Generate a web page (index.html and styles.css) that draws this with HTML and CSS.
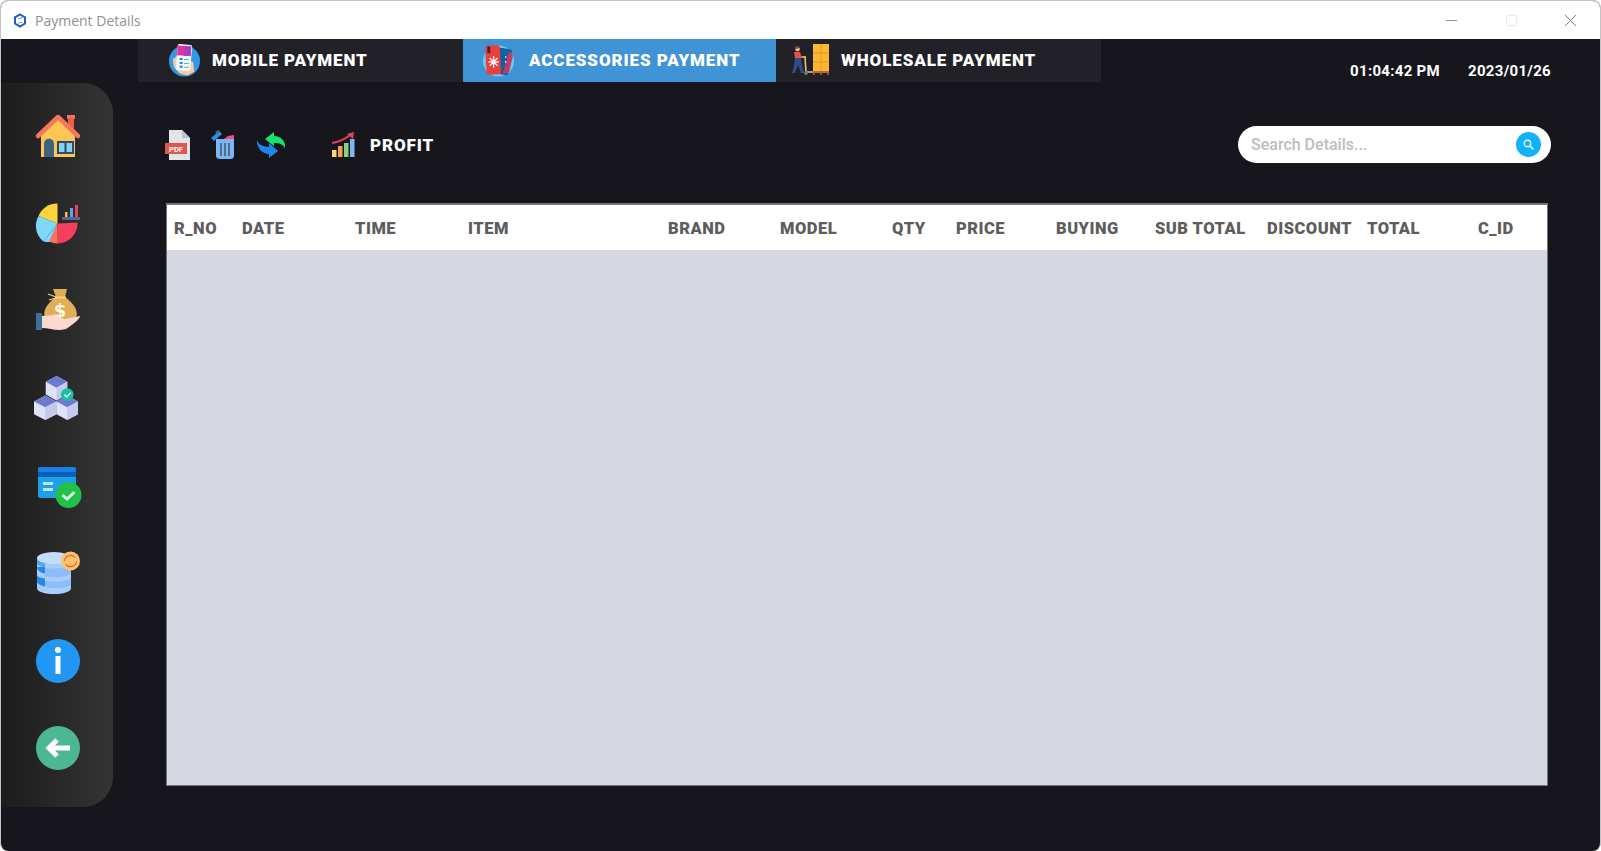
FILE: index.html
```html
<!DOCTYPE html>
<html lang="en">

<head>
    <meta charset="UTF-8">
    <title>Payment Details</title>
    <link rel="stylesheet" href="styles.css">
</head>

<body>
<div class="window">

    <div class="titlebar">
        <svg class="app-logo" viewBox="0 0 14 14"><path d="M7 1 12 3.800V10L7 13 2 10V3.800Z" fill="none" stroke="#1a5fd0" stroke-width="2"/><path d="M5 5.500 9 4M9.500 9 5 9.500" stroke="#6fa0e8" stroke-width="1.200"/></svg>
        <span class="title">Payment Details</span>
        <div class="controls">
            <svg viewBox="0 0 14 14"><path d="M0 7H12" stroke="#8a8a8a" stroke-width="1"/></svg>
            <svg viewBox="0 0 14 14"><rect x="1.500" y="1.500" width="11" height="11" rx="1" fill="none" stroke="#e6e6e6"/></svg>
            <svg viewBox="0 0 14 14"><path d="M1 1 13 13M13 1 1 13" stroke="#777" stroke-width="1"/></svg>
        </div>
    </div>

    <div class="topbar">
        <nav class="tabs">
            <a class="tab tab-mobile">
                <svg class="tab-icon" viewBox="0 0 34 36">
                    <circle cx="17" cy="19" r="16" fill="#2f9be4"/>
                    <path d="M5 17 11 13 26 20 27 30 20 34 12 32 6 25Z" fill="#f8c9a4"/>
                    <rect x="9" y="2" width="15" height="27" rx="2" transform="rotate(5 16 15)" fill="#f4f6fb"/>
                    <path d="M10 3 24 4 23.400 14 9.300 13Z" fill="#ea2f9c"/>
                    <path d="M17 3.500 24 4 23.400 14 16 13.500Z" fill="#a640c8"/>
                    <path d="M12 16h3v2h-3zM12 20h3v2h-3zM12 24h3v2h-3z" fill="#2f7fd0"/>
                    <path d="M16.500 17h5v1h-5zM16.500 21h5v1h-5zM16.500 25h5v1h-5z" fill="#35c0d8"/>
                </svg>
                <span>MOBILE PAYMENT</span>
            </a>
            <a class="tab tab-accessories active">
                <svg class="tab-icon" viewBox="0 0 34 36">
                    <circle cx="17" cy="19" r="16" fill="#6fc9ee"/>
                    <rect x="15" y="6" width="14" height="27" rx="2" transform="rotate(10 22 19)" fill="#15609e"/>
                    <path d="M28 9 32 13 28 30 21 33Z" fill="#c23a60"/>
                    <rect x="4" y="3" width="15" height="30" rx="2" fill="#ea3f3a" transform="rotate(-3 11 18)"/>
                    <rect x="5.500" y="4" width="3" height="7" fill="#4a2030"/>
                    <path d="M12 14V26M6.500 20H17.500M8 16 16 24M16 16 8 24" stroke="#fff" stroke-width="1.400"/>
                    <path d="M24 14h1v2h-1zM24 19h1v2h-1z" fill="#fff"/>
                </svg>
                <span>ACCESSORIES PAYMENT</span>
            </a>
            <a class="tab tab-wholesale">
                <svg class="tab-icon wide" viewBox="0 0 38 32">
                    <rect x="22" y="0" width="16" height="28" fill="#fbb731"/>
                    <path d="M22 9H38M22 18H38M30 0V28" stroke="#e59a1e" stroke-width="1"/>
                    <rect x="22" y="27" width="16" height="2" fill="#b9683a"/>
                    <path d="M22 29h2v2h-2zM29 29h2v2h-2zM36 29h2v2h-2z" fill="#8f4f2a"/>
                    <path d="M14 13 15 28H22" stroke="#e8c860" stroke-width="1.600" fill="none"/>
                    <path d="M10 13H15" stroke="#f3d06a" stroke-width="1.600"/>
                    <circle cx="6.500" cy="5" r="2.400" fill="#f1b58d"/>
                    <path d="M4 3.500 9 2.500 9 4 4 5Z" fill="#7a3d22"/>
                    <path d="M3 8H9L11 14H4Z" fill="#e5533d"/>
                    <path d="M4 14H10L11 21 13 29H10L7 21 4 29H1L3 21Z" fill="#2f4c8c"/>
                    <circle cx="15" cy="29" r="2" fill="#6a7486"/>
                </svg>
                <span>WHOLESALE PAYMENT</span>
            </a>
        </nav>
        <div class="clock">
            <span>01:04:42 PM</span>
            <span>2023/01/26</span>
        </div>
    </div>

    <div class="main">
        <aside class="sidebar">
            <svg class="side-icon" viewBox="0 0 44 44">
                <rect x="31" y="2" width="8" height="4" fill="#f4775a"/>
                <rect x="32" y="5" width="6" height="12" fill="#e8604a"/>
                <path d="M5 21 22 5 39 21V44H5Z" fill="#fdc654"/>
                <path d="M2 23 22 4 42 23" fill="none" stroke="#f4775a" stroke-width="4.500" stroke-linecap="round" stroke-linejoin="round"/>
                <path d="M8 44V31C8 24 18 24 18 31V44Z" fill="#41627c"/>
                <rect x="21" y="28" width="17" height="13" fill="#2f4a62"/>
                <path d="M23 30H28.500V39H23ZM30.500 30H36V39H30.500Z" fill="#7fd4f7"/>
            </svg>
            <svg class="side-icon pie" viewBox="0 0 44 44">
                <path d="M20.500 22.400V2.400A20 20 0 0 0 1.500 15Z" fill="#fdd33d"/>
                <path d="M20.500 22.400 1.500 15A20 20 0 0 0 6.500 40.500Z" fill="#7ed6f8"/>
                <path d="M20.500 22.400 6.500 40.500A20 20 0 0 0 13 41Z" fill="#7ed6f8"/>
                <path d="M20.500 22.400 12 40.500A20 20 0 0 0 21 42.400Z" fill="#f4775a"/>
                <path d="M20.500 22.400 20 42.400A20 20 0 0 0 40.500 21.500Z" fill="#f43f5e"/>
                <rect x="25" y="16" width="18" height="3" rx="1" fill="#5a6690"/>
                <rect x="28" y="11" width="2.500" height="5" fill="#fdc03d"/>
                <rect x="33" y="7" width="3" height="9" fill="#5aa5ee"/>
                <rect x="38" y="4" width="3" height="12" fill="#e8405e"/>
            </svg>
            <svg class="side-icon" viewBox="0 0 44 44">
                <path d="M17 1H31L29 9H20Z" fill="#e0ad50"/>
                <path d="M20 9H29C37 15 43 22 40 30 37 36 13 37 9 30 6 22 12 15 20 9Z" fill="#dfae56"/>
                <path d="M19 9.500H30" stroke="#f5d488" stroke-width="2"/>
                <path d="M20 9 12 6M20 10 13 12" stroke="#f5d488" stroke-width="1.200"/>
                <text class="dollar" x="24" y="29">$</text>
                <path d="M6 28 17 27C20 26 26 31 29 31L44 28C44 31 36 37 30 41 22 44 14 40 6 40Z" fill="#fbd8d0"/>
                <rect x="0" y="25" width="6" height="17" fill="#3f7097"/>
            </svg>
            <svg class="side-icon cubes" viewBox="0 0 45 45">
                <path d="M12 6 23 0 34 6V19L23 25 12 19Z" fill="#dfe3fa"/>
                <path d="M12 6 23 0 34 6 23 12Z" fill="#6d79cf"/>
                <path d="M23 12V25L34 19V6Z" fill="#c3c9ef"/>
                <path d="M0 26 11.500 20 23 26V39L11.500 45 0 39Z" fill="#dfe3fa"/>
                <path d="M0 26 11.500 20 23 26 11.500 32Z" fill="#6d79cf"/>
                <path d="M11.500 32V45L23 39V26Z" fill="#c3c9ef"/>
                <path d="M23 26 34 20 45 26V39L34 45 23 39Z" fill="#dfe3fa"/>
                <path d="M23 26 34 20 45 26 34 32Z" fill="#6d79cf"/>
                <path d="M34 32V45L45 39V26Z" fill="#c3c9ef"/>
                <circle cx="34" cy="19" r="6.500" fill="#1cbf9f"/>
                <path d="M31 19 33.500 21.500 37.500 17" fill="none" stroke="#e8fff8" stroke-width="1.400"/>
            </svg>
            <svg class="side-icon card" viewBox="0 0 44 44">
                <rect x="0" y="0" width="38" height="31" rx="2.500" fill="#1d9fea"/>
                <path d="M0 2.500A2.500 2.500 0 0 1 2.500 0H35.500A2.500 2.500 0 0 1 38 2.500V5H0Z" fill="#1a80e8"/>
                <rect x="0" y="5" width="38" height="5" fill="#0c5fb8"/>
                <path d="M5 15H15V18H5ZM5 21H15V24H5Z" fill="#b8e6fb"/>
                <circle cx="30.500" cy="28" r="13" fill="#22c14a"/>
                <path d="M24.500 28 29 32 36.500 25" fill="none" stroke="#dff8ee" stroke-width="3"/>
            </svg>
            <svg class="side-icon db" viewBox="0 0 44 44">
                <path d="M0 8V37C0 45 34 45 34 37V8Z" fill="#a9cdfb"/>
                <path d="M0 16C0 21 6 22 8 22.500V16ZM0 30C0 34 6 35 8 35.500V27.500C5 27 1 26 0 25Z" fill="#1f8ce8"/>
                <path d="M0 8V13C1 15 6 16 8 16.500V8Z" fill="#5aa5f0"/>
                <path d="M8 16.500C18 19 30 17 34 13V22C30 26 18 28 8 25.500Z" fill="#8ebcf8"/>
                <path d="M8 30C18 32 30 30 34 27V34C30 37 18 38 8 36Z" fill="#8ebcf8"/>
                <ellipse cx="17" cy="7" rx="17" ry="6" fill="#c4dcfb"/>
                <circle cx="33.500" cy="10" r="9.500" fill="#fcc56b"/>
                <path d="M27.500 10A6 6 0 0 1 38.500 7M39.500 10A6 6 0 0 1 28.500 13" fill="none" stroke="#f0604a" stroke-width="1.300"/>
            </svg>
            <svg class="side-icon" viewBox="0 0 44 44">
                <circle cx="22" cy="22" r="22" fill="#2196f3"/>
                <circle cx="22" cy="11" r="3" fill="#fff"/>
                <rect x="19.500" y="17" width="5" height="18" fill="#fff"/>
            </svg>
            <svg class="side-icon" viewBox="0 0 44 44">
                <circle cx="22" cy="22" r="22" fill="#4cb795"/>
                <path d="M34 22H14M21 14 13 22 21 30" fill="none" stroke="#fff" stroke-width="5"/>
            </svg>
        </aside>

        <section class="content">
            <div class="toolbar">
                <div class="tools">
                    <svg class="tool tool-pdf" viewBox="0 0 25 30">
                        <path d="M4 0H17L25 8V30H4Z" fill="#e3e4e8"/>
                        <path d="M17 0 25 8H17Z" fill="#bfc1c8"/>
                        <rect x="0" y="13" width="22" height="11" fill="#e2574c"/>
                        <text class="pdf-label" x="11" y="21.500">PDF</text>
                    </svg>
                    <svg class="tool tool-trash" viewBox="0 0 23 29">
                        <path d="M5 9H23V26C23 28 21 29 19 29H9C7 29 5 28 5 26Z" fill="#7ab8f5"/>
                        <path d="M10 13V26M14 13V26M18 13V26" stroke="#4a5a70" stroke-width="1.600"/>
                        <path d="M13 9 17 6 23 5V9Z" fill="#f04e7c"/>
                        <path d="M0 8 8 1 11 4 3 11Z" fill="#2d8ce8"/>
                        <path d="M4 2 7 0 9 1 6 4Z" fill="#5a5f6a"/>
                    </svg>
                    <svg class="tool tool-refresh" viewBox="0 0 28 26">
                        <path d="M28 17C27 12 22 11 17 11V14L8 7 17 0V4C24 4 29 9 28 17Z" fill="#14e36d"/>
                        <path d="M0 7C0 12 6 15 12 15V11L21 19 12 26V22C5 22 -1 15 0 7Z" fill="#1e86f0"/>
                    </svg>
                    <div class="profit">
                        <svg class="tool tool-profit" viewBox="0 0 23 25">
                            <path d="M0 11C7 10 13 7 18 3" fill="none" stroke="#e8405e" stroke-width="1.800"/>
                            <path d="M15 2 22 0 21 7Z" fill="#e8405e"/>
                            <rect x="0" y="18" width="4.500" height="7" fill="#fdd27a"/>
                            <rect x="6" y="14" width="4.500" height="11" fill="#f2a04a"/>
                            <rect x="12" y="11" width="4.500" height="14" fill="#8ccf7e"/>
                            <rect x="18" y="7" width="4.500" height="18" fill="#7ab8f5"/>
                        </svg>
                        <span>PROFIT</span>
                    </div>
                </div>
                <div class="search">
                    <span class="search-text">Search Details...</span>
                    <span class="search-btn">
                        <svg viewBox="0 0 12 12"><circle cx="5" cy="5" r="3" fill="none" stroke="#fff" stroke-width="1.200"/><path d="M7.300 7.300 10.500 10.500" stroke="#fff" stroke-width="1.500"/></svg>
                    </span>
                </div>
            </div>

            <div class="table">
                <div class="table-head">
                    <div>R_NO</div>
                    <div>DATE</div>
                    <div>TIME</div>
                    <div>ITEM</div>
                    <div>BRAND</div>
                    <div>MODEL</div>
                    <div>QTY</div>
                    <div>PRICE</div>
                    <div>BUYING</div>
                    <div>SUB TOTAL</div>
                    <div>DISCOUNT</div>
                    <div>TOTAL</div>
                    <div>C_ID</div>
                </div>
                <div class="table-body"></div>
            </div>
        </section>
    </div>
</div>
</body>

</html>
```

FILE: styles.css
```css
* {
  box-sizing: border-box;
}

html, body {
  margin: 0;
  height: 100%;
  overflow: hidden;
  background-color: #fff;
}

.window {
  height: 851px;
  width: 1601px;
  display: flex;
  flex-direction: column;
  background-color: #16161c;
  border: 1px solid #c4c4c4;
  border-bottom: none;
  border-radius: 8px;
  overflow: hidden;
  font-family: Roboto, "Liberation Sans", sans-serif;
}

/* title bar */
.titlebar {
  height: 38px;
  flex: none;
  display: flex;
  align-items: center;
  background-color: #fff;
  padding-left: 12px;
}

.app-logo {
  width: 14px;
  height: 15px;
}

.title {
  margin-left: 8px;
  font-family: "Open Sans", sans-serif;
  font-size: 14px;
  color: #909090;
}

.controls {
  margin-left: auto;
  display: flex;
  gap: 46px;
  padding-right: 23px;
}

.controls svg {
  width: 13px;
  height: 13px;
}

/* tabs + clock */
.topbar {
  height: 43px;
  flex: none;
  display: flex;
  padding-left: 137px;
}

.tabs {
  display: flex;
  width: 963px;
  background-color: #222127;
}

.tab {
  display: flex;
  align-items: center;
  color: #fff;
  font-weight: 900;
  font-size: 17px;
  letter-spacing: 0.9px;
  padding-bottom: 1px;
}

.tab-mobile {
  width: 325px;
  padding-left: 30px;
  gap: 11px;
}

.tab-accessories {
  width: 313px;
  padding-left: 19px;
  gap: 14px;
}

.tab-wholesale {
  width: 325px;
  padding-left: 15px;
  gap: 12px;
}

.active {
  background-color: #4094d6;
}

.tab-icon {
  width: 33px;
  height: 36px;
  flex: none;
}

.tab-icon.wide {
  width: 38px;
  height: 32px;
}

.clock {
  margin-left: auto;
  padding: 23px 49px 0 0;
  display: flex;
  gap: 28px;
  color: #fff;
  font-weight: 700;
  font-size: 15px;
  letter-spacing: 0.3px;
}

/* sidebar */
.main {
  flex: 1;
  display: flex;
  align-items: flex-start;
}

.sidebar {
  width: 112px;
  height: 724px;
  margin-top: 1px;
  flex: none;
  display: flex;
  flex-direction: column;
  gap: 43.6px;
  padding: 30px 0 0 35px;
  background: linear-gradient(to right, #1c1c1c, #343434);
  border-radius: 0 30px 30px 0;
}

.side-icon {
  width: 44px;
  height: 44px;
  flex: none;
  overflow: visible;
}

.side-icon.pie {
  transform: translateX(1px);
}

.side-icon.card {
  transform: translate(2px, 4px);
}

.side-icon.cubes {
  transform: translateX(-2px);
}

.side-icon.db {
  transform: translateX(1px);
}

.dollar {
  font-family: "DejaVu Sans", sans-serif;
  font-size: 18px;
  font-weight: 700;
  fill: #fff6e0;
  text-anchor: middle;
}

/* content area */
.content {
  width: 1382px;
  margin-left: 53px;
}

.toolbar {
  height: 121px;
  display: flex;
  align-items: center;
  justify-content: space-between;
  padding-top: 4px;
}

.tools {
  display: flex;
  align-items: center;
}

.tool {
  flex: none;
  overflow: visible;
}

.tool-pdf {
  width: 25px;
  height: 30px;
  margin-left: -1px;
}

.tool-trash {
  width: 23px;
  height: 29px;
  margin-left: 21px;
}

.tool-refresh {
  width: 28px;
  height: 26px;
  margin-left: 23px;
}

.tool-profit {
  width: 23px;
  height: 25px;
}

.pdf-label {
  font-family: Roboto, sans-serif;
  font-size: 7.5px;
  font-weight: 700;
  fill: #fff;
  text-anchor: middle;
}

.profit {
  display: flex;
  align-items: center;
  gap: 15px;
  margin-left: 47px;
  color: #fff;
  font-weight: 900;
  font-size: 17px;
  letter-spacing: 0.9px;
}

.search {
  width: 313px;
  height: 37px;
  margin-right: -3px;
  display: flex;
  align-items: center;
  justify-content: space-between;
  padding: 0 10px 0 13px;
  background-color: #fff;
  border-radius: 19px;
}

.search-text {
  color: #bdbdbd;
  font-size: 16px;
  font-weight: 500;
}

.search-btn {
  width: 25px;
  height: 25px;
  border-radius: 50%;
  display: flex;
  align-items: center;
  justify-content: center;
  background-color: #14b1fb;
}

.search-btn svg {
  width: 13px;
  height: 13px;
}

/* table */
.table {
  width: 1382px;
  height: 583px;
  display: flex;
  flex-direction: column;
  border: 1px solid #74747c;
  border-top-width: 2px;
}

.table-head {
  height: 45px;
  flex: none;
  display: grid;
  grid-template-columns: 68px 113px 113px 200px 112px 112px 64px 100px 99px 112px 100px 111px 1fr;
  align-items: center;
  padding: 2px 0 0 7px;
  background-color: #fff;
  color: #5e5c5c;
  font-weight: 900;
  font-size: 16.5px;
  letter-spacing: 0.5px;
}

.table-body {
  flex: 1;
  background-color: #d5d8e1;
}
```
